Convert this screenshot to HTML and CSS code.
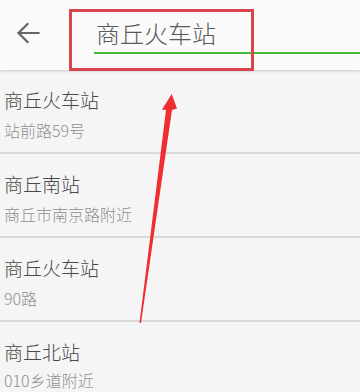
FILE: index.html
```html
<!DOCTYPE html>
<html lang="zh-CN">
<head>
<meta charset="utf-8">
<title>搜索</title>
<link rel="stylesheet" href="styles.css">
</head>
<body>
<div class="page">
  <header class="topbar">
    <svg class="back" width="24" height="22" viewBox="0 0 24 22">
      <path d="M22.5 11H2.5M11.5 2L2.5 11L11.5 20" fill="none" stroke="#666" stroke-width="2.2" stroke-linecap="square"/>
    </svg>
    <div class="search">
      <span class="query">商丘火车站</span>
    </div>
  </header>
  <ul class="list">
    <li class="item"><div class="title">商丘火车站</div><div class="sub">站前路59号</div></li>
    <li class="item"><div class="title">商丘南站</div><div class="sub">商丘市南京路附近</div></li>
    <li class="item"><div class="title">商丘火车站</div><div class="sub">90路</div></li>
    <li class="item"><div class="title">商丘北站</div><div class="sub">010乡道附近</div></li>
  </ul>
  <div class="highlight"></div>
  <svg class="pointer" width="360" height="392" viewBox="0 0 360 392">
    <polygon points="139.5,323 141,323 172,110 177,108.5 171.7,94 162,109.5 166,110" fill="#ee2e30"/>
  </svg>
</div>
</body>
</html>
```
FILE: styles.css
```css
* { box-sizing: border-box; }
html, body { margin: 0; padding: 0; }
body {
  background: #f5f5f5;
  font-family: "Noto Sans CJK SC", "Noto Sans", sans-serif;
  font-weight: 300;
  width: 360px;
  height: 392px;
  overflow: hidden;
}
.page { position: relative; width: 360px; height: 392px; }
.topbar {
  height: 70px;
  background: #fafafa;
  display: flex;
  align-items: flex-start;
  box-shadow: 0 1px 3px rgba(0,0,0,0.18);
  position: relative;
  z-index: 1;
}
.back { margin: 22px 0 0 16px; flex: none; }
.search {
  margin-left: 54px;
  flex: 1;
  height: 54px;
  border-bottom: 2px solid #43b93a;
  padding-top: 16px;
}
.query {
  display: block;
  font-size: 24px;
  line-height: 34px;
  color: #5a5a5a;
  margin-left: 2px;
}
.list { list-style: none; margin: 0; padding: 0; }
.item {
  height: 84px;
  padding: 18px 0 0 4px;
  border-bottom: 2px solid #d9d9d9;
}
.item:last-child { height: auto; border-bottom: 0; }
.item:last-child .sub { margin-top: 7px; }
.title {
  font-size: 19px;
  line-height: 24px;
  color: #484848;
}
.sub {
  margin-top: 9px;
  font-size: 16px;
  line-height: 18px;
  color: #909090;
}
.highlight {
  position: absolute;
  left: 69px;
  top: 9px;
  width: 185px;
  height: 62px;
  border: 3px solid #d8464b;
  z-index: 2;
}
.pointer { position: absolute; left: 0; top: 0; z-index: 3; }
```
